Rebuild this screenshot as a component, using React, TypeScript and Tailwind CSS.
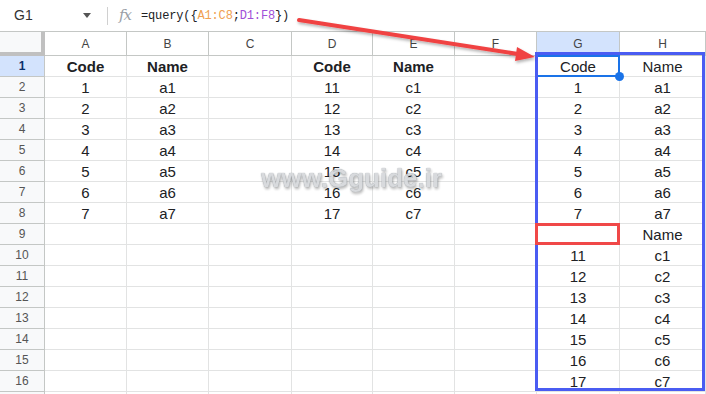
import React from 'react';

const COLS = ['A', 'B', 'C', 'D', 'E', 'F', 'G', 'H'];

type Cell = { v?: string; b?: boolean };

const buildRows = (): Cell[][] => {
  const rows: Cell[][] = [];
  for (let r = 1; r <= 17; r++) {
    const row: Cell[] = COLS.map(() => ({}));
    if (r === 1) {
      row[0] = { v: 'Code', b: true };
      row[1] = { v: 'Name', b: true };
      row[3] = { v: 'Code', b: true };
      row[4] = { v: 'Name', b: true };
      row[6] = { v: 'Code' };
      row[7] = { v: 'Name' };
    } else if (r <= 8) {
      const n = r - 1;
      row[0] = { v: String(n) };
      row[1] = { v: 'a' + n };
      row[3] = { v: String(10 + n) };
      row[4] = { v: 'c' + n };
      row[6] = { v: String(n) };
      row[7] = { v: 'a' + n };
    } else if (r === 9) {
      row[7] = { v: 'Name' };
    } else if (r <= 16) {
      const n = r - 9;
      row[6] = { v: String(10 + n) };
      row[7] = { v: 'c' + n };
    }
    rows.push(row);
  }
  return rows;
};

const ROWS = buildRows();

export default function App() {
  return (
    <div className="relative w-[706px] h-[394px] overflow-hidden bg-white font-['Liberation_Sans',Arial,sans-serif] text-[#202124]">
      {/* formula bar */}
      <div className="h-[31px] flex items-center bg-white">
        <div className="w-[100px] pl-[14px] flex items-center justify-between pr-[9px]">
          <span className="text-[14px] text-[#333]">G1</span>
          <svg width="8" height="5" viewBox="0 0 8 5"><path d="M0 0 L8 0 L4 5 Z" fill="#555" /></svg>
        </div>
        <div className="w-px h-[18px] bg-[#d0d0d0] ml-[7px]" />
        <span className="ml-[11px] text-[15px] italic text-[#9aa0a6] font-['DejaVu_Serif',serif] tracking-[-1px]">fx</span>
        <span className="ml-[10px] text-[12px] font-['Liberation_Mono',monospace] text-[#202124] tracking-[-0.15px]">
          =query({'{'}<span className="text-[#f0a050]">A1:C8</span>;<span className="text-[#a04fd8]">D1:F8</span>{'}'})
        </span>
      </div>

      {/* grid */}
      <div className="grid grid-cols-[45px_82px_82px_83px_81px_82px_82px_83px_86px] grid-rows-[24px_repeat(17,21px)] border-t border-[#c4c7c5]">
        <div className="bg-[#f8f9fa] border-r-[4px] border-b-[4px] border-[#c0c0c0]" />
        {COLS.map(c => (
          <div
            key={c}
            className={`flex items-center justify-center text-[12px] text-[#444] border-r border-b border-[#c4c7c5] ${c === 'G' ? 'bg-[#d3e3fd] text-[#0b2f6b]' : 'bg-white'}`}
          >
            {c}
          </div>
        ))}
        {ROWS.map((row, ri) => (
          <React.Fragment key={ri}>
            <div
              className={`flex items-center justify-center text-[12px] border-r border-b border-[#c4c7c5] ${ri === 0 ? 'bg-[#d3e3fd] font-bold text-[#0b2f6b]' : 'bg-[#f8f9fa] text-[#555]'}`}
            >
              {ri < 16 ? ri + 1 : ''}
            </div>
            {row.map((cell, ci) => (
              <div
                key={ci}
                className={`relative flex items-center justify-center text-[15px] leading-none border-r border-b border-[#e2e3e3] ${cell.b ? 'font-bold' : ''} ${ri === 0 && ci === 6 ? 'z-10' : ''}`}
              >
                {cell.v}
                {ri === 0 && ci === 6 && (
                  <>
                    <div className="absolute inset-[-1px] border-2 border-[#1a73e8]" />
                    <div className="absolute right-[-5px] bottom-[-5px] w-[9px] h-[9px] rounded-full bg-[#1a73e8]" />
                  </>
                )}
              </div>
            ))}
          </React.Fragment>
        ))}
      </div>

      {/* result range outline */}
      <div className="absolute left-[535px] top-[52px] w-[170px] h-[339px] border-[3px] border-[#4a5cf2] z-20" />
      {/* empty header highlight */}
      <div className="absolute left-[535px] top-[223px] w-[85px] h-[22px] border-[3px] border-[#f04848] z-20" />

      {/* arrow */}
      <svg className="absolute left-0 top-0 pointer-events-none z-30" width="706" height="394" viewBox="0 0 706 394">
        <defs>
          <filter id="sh" x="-10%" y="-50%" width="120%" height="200%">
            <feDropShadow dx="1" dy="2" stdDeviation="1.5" floodColor="#000" floodOpacity="0.3" />
          </filter>
        </defs>
        <g filter="url(#sh)">
          <line x1="299" y1="20" x2="518" y2="54" stroke="#f04343" strokeWidth="4" strokeLinecap="round" />
          <polygon points="535,57 517,47 515,61" fill="#f04343" />
        </g>
      </svg>

      {/* watermark */}
      <div className="absolute left-[261px] top-[165px] text-[26px] leading-none font-bold text-[#d4d7da] [text-shadow:0_0_1px_#7d838a,1px_2px_3px_rgba(0,0,0,0.35)] opacity-90 pointer-events-none z-30">
        www.Gguide.ir
      </div>
    </div>
  );
}
